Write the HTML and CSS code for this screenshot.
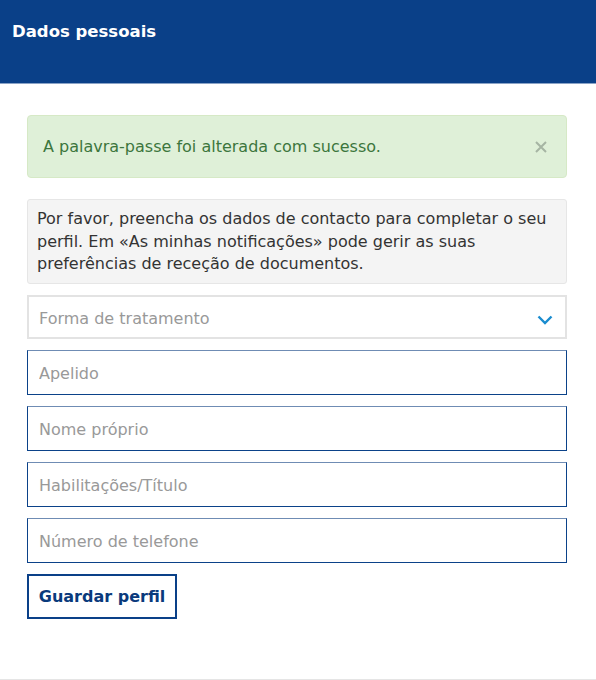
FILE: index.html
```html
<!DOCTYPE html>
<html lang="pt">
<head>
<meta charset="UTF-8" />
<meta name="viewport" content="width=device-width, initial-scale=1" />
<title>Dados pessoais</title>
<link rel="stylesheet" href="styles.css">
</head>
<body>

<header class="page-head">
  <h1>Dados pessoais</h1>
</header>

<main class="profile">
  <div class="alert-ok">
    <span>A palavra-passe foi alterada com sucesso.</span>
    <button class="alert-close" aria-label="Fechar">
      <svg width="12" height="12" viewBox="0 0 12 12"><path d="M1 1 L11 11 M11 1 L1 11" stroke="currentColor" stroke-width="2" fill="none"/></svg>
    </button>
  </div>

  <div class="info-box">
    Por favor, preencha os dados de contacto para completar o seu perfil. Em «As minhas notificações» pode gerir as suas preferências de receção de documentos.
  </div>

  <form class="profile-form">
    <div class="select-wrap">
      <select class="field select-field">
        <option>Forma de tratamento</option>
      </select>
      <svg class="chevron" width="16" height="10" viewBox="0 0 16 10"><polyline points="1.5,1.5 8,8 14.5,1.5" stroke="#1a8ccf" stroke-width="2.4" fill="none"/></svg>
    </div>
    <input class="field" type="text" placeholder="Apelido" />
    <input class="field" type="text" placeholder="Nome próprio" />
    <input class="field" type="text" placeholder="Habilitações/Título" />
    <input class="field" type="text" placeholder="Número de telefone" />
    <div>
      <button type="button" class="save-btn">Guardar perfil</button>
    </div>
  </form>
</main>

</body>
</html>
```

FILE: styles.css
```css
body {
  margin: 0;
  font-family: "DejaVu Sans", Verdana, sans-serif;
  color: #333;
  background: #fff;
}
.page-head {
  background: #0a4088;
  height: 83px;
  border-bottom: 1px solid #8aa3c6;
  padding: 0 12px;
}
.page-head h1 {
  margin: 0;
  padding-top: 21px;
  font-size: 16.5px;
  line-height: 22px;
  color: #fff;
  font-weight: bold;
}
.profile {
  padding: 31px 29px 60px 27px;
  border-bottom: 1px solid #e5e5e5;
}
.alert-ok {
  display: flex;
  align-items: center;
  justify-content: space-between;
  background: #dff0d8;
  border: 1px solid #d6e9c6;
  border-radius: 4px;
  color: #3c763d;
  font-size: 16px;
  line-height: 21px;
  padding: 20px 19px 20px 15px;
  margin-bottom: 21px;
}
.alert-close {
  background: none;
  border: none;
  padding: 0;
  color: #a6b5a3;
  display: flex;
  cursor: pointer;
}
.info-box {
  background: #f4f4f4;
  border: 1px solid #e6e6e6;
  border-radius: 3px;
  font-size: 16px;
  line-height: 22.5px;
  padding: 8px 9px 7px 9px;
  margin-bottom: 11px;
}
.profile-form {
  display: flex;
  flex-direction: column;
  gap: 11px;
}
.field {
  box-sizing: border-box;
  width: 100%;
  height: 45px;
  margin: 0;
  padding: 3px 11px 0;
  font-family: "DejaVu Sans", Verdana, sans-serif;
  font-size: 16px;
  color: #333;
  background: #fff;
  border: 1px solid #0b4289;
  border-top-color: #6f8cb4;
  border-radius: 0;
  outline: none;
}
.field::placeholder {
  color: #999;
}
.select-wrap {
  position: relative;
}
.select-field {
  appearance: none;
  height: 44px;
  border: 2px solid #e3e3e3;
  padding: 3px 10px 0;
  color: #999;
}
.chevron {
  position: absolute;
  right: 14px;
  top: 20px;
  pointer-events: none;
}
.save-btn {
  box-sizing: border-box;
  height: 45px;
  width: 150px;
  background: #fff;
  border: 2px solid #0a4088;
  color: #0a3a7c;
  font-family: "DejaVu Sans", Verdana, sans-serif;
  font-size: 16px;
  font-weight: bold;
  padding: 0;
  cursor: pointer;
}
```
